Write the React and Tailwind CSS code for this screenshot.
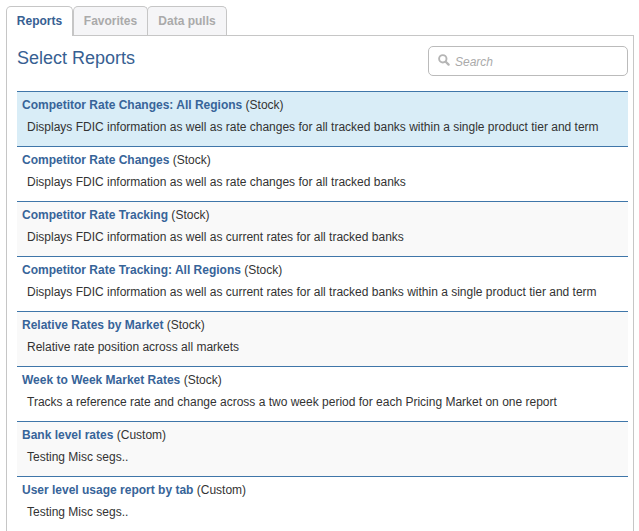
const tabs = [
  { label: 'Reports', active: true, width: 'w-[67px]' },
  { label: 'Favorites', active: false, width: 'w-[75px]' },
  { label: 'Data pulls', active: false, width: 'w-[80px] -ml-px' },
];

const reports = [
  { name: 'Competitor Rate Changes: All Regions', kind: 'Stock', text: 'Displays FDIC information as well as rate changes for all tracked banks within a single product tier and term', selected: true },
  { name: 'Competitor Rate Changes', kind: 'Stock', text: 'Displays FDIC information as well as rate changes for all tracked banks' },
  { name: 'Competitor Rate Tracking', kind: 'Stock', text: 'Displays FDIC information as well as current rates for all tracked banks' },
  { name: 'Competitor Rate Tracking: All Regions', kind: 'Stock', text: 'Displays FDIC information as well as current rates for all tracked banks within a single product tier and term' },
  { name: 'Relative Rates by Market', kind: 'Stock', text: 'Relative rate position across all markets' },
  { name: 'Week to Week Market Rates', kind: 'Stock', text: 'Tracks a reference rate and change across a two week period for each Pricing Market on one report' },
  { name: 'Bank level rates', kind: 'Custom', text: 'Testing Misc segs..' },
  { name: 'User level usage report by tab', kind: 'Custom', text: 'Testing Misc segs..' },
];

function Tab({ label, active, width }) {
  const look = active
    ? 'bg-white text-[#376092] h-[30px]'
    : 'bg-[#f5f5f7] text-[#aaaaaa] h-[29px]';
  return (
    <button className={`${width} ${look} shrink-0 rounded-t-[5px] border border-b-0 border-[#c6c6c6] pb-px text-center text-xs font-bold whitespace-nowrap`}>
      {label}
    </button>
  );
}

function SearchBox() {
  return (
    <label className="flex h-[30px] w-[200px] items-center rounded-[5px] border border-[#bbbbbb] bg-white pl-[9px]">
      <svg viewBox="0 0 12 12" className="mb-[2px] size-3 shrink-0 fill-none stroke-[#b5b5b5]">
        <circle cx="4.800" cy="4.800" r="3.700" strokeWidth="1.900" />
        <path d="M7.700 7.700 10.600 10.600" strokeWidth="2.300" strokeLinecap="round" />
      </svg>
      <input
        placeholder="Search"
        className="ml-[5px] w-[150px] bg-transparent pt-px text-xs italic outline-none placeholder:text-[#aaaaaa]"
      />
    </label>
  );
}

function ReportRow({ report, index }) {
  const bg = report.selected ? 'bg-[#d9edf7]' : index % 2 === 0 ? 'bg-[#f9f9f9]' : 'bg-white';
  return (
    <li className={`${bg} h-[55px] border-t border-[#3f76a9] pt-1 pl-[5px] text-xs leading-[18px] whitespace-nowrap text-[#333333]`}>
      <div>
        <a className="font-bold text-[#376499]">{report.name}</a> ({report.kind})
      </div>
      <p className="mt-1 pl-[5px]">{report.text}</p>
    </li>
  );
}

export default function App() {
  return (
    <div className="flex h-[531px] w-[639px] flex-col overflow-hidden bg-white pt-[6px] pl-[6px] font-['Liberation_Sans',Arial,sans-serif]">
      <nav className="relative z-10 flex h-[29px] items-start">
        {tabs.map((tab) => (
          <Tab key={tab.label} {...tab} />
        ))}
      </nav>
      <main className="h-[520px] w-[628px] shrink-0 border border-[#c6c6c6] pr-[5px] pl-[10px]">
        <header className="flex h-[55px] items-start justify-between pt-[10px]">
          <h1 className="text-lg leading-6 text-[#376092]">Select Reports</h1>
          <SearchBox />
        </header>
        <ul>
          {reports.map((report, index) => (
            <ReportRow key={report.name} report={report} index={index} />
          ))}
        </ul>
      </main>
    </div>
  );
}
